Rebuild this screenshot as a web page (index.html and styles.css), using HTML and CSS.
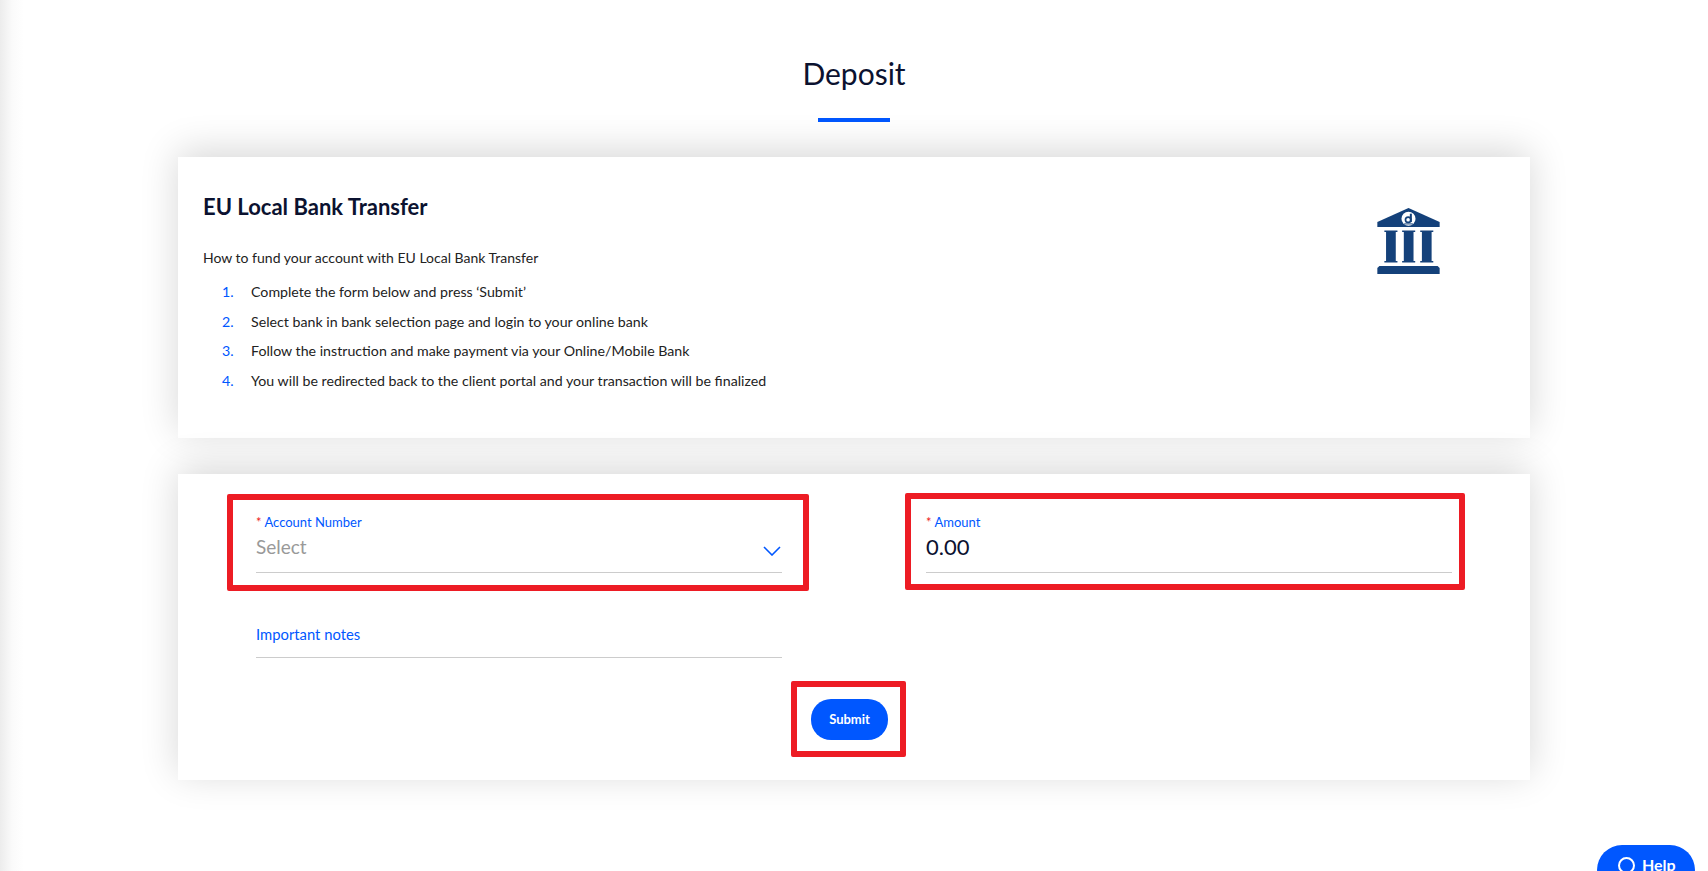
FILE: index.html
```html
<!DOCTYPE html>
<html lang="en">

<head>
    <meta charset="UTF-8">
    <title>Deposit</title>
    <link rel="stylesheet" href="styles.css">
</head>

<body>

    <div class="page">
        <h1 class="page-title">Deposit</h1>
        <div class="title-bar"></div>

        <section class="card info-card">
            <div class="info-text">
                <h2>EU Local Bank Transfer</h2>
                <p>How to fund your account with EU Local Bank Transfer</p>
                <ol class="steps">
                    <li><span class="step-num">1.</span>Complete the form below and press ‘Submit’</li>
                    <li><span class="step-num">2.</span>Select bank in bank selection page and login to your online bank</li>
                    <li><span class="step-num">3.</span>Follow the instruction and make payment via your Online/Mobile Bank</li>
                    <li><span class="step-num">4.</span>You will be redirected back to the client portal and your transaction will be finalized</li>
                </ol>
            </div>
            <svg class="bank-icon" viewBox="112 55 186 197" aria-hidden="true">
                <path fill="#14417a" d="M205 55L298 97V112H112V97Z" />
                <circle cx="205" cy="87" r="21" fill="#fff" />
                <circle cx="204" cy="90" r="8" fill="none" stroke="#14417a" stroke-width="5" />
                <rect x="209" y="72" width="6" height="25" fill="#14417a" />
                <rect x="192" y="101" width="26" height="3" fill="#14417a" />
                <path fill="#14417a" d="M133 122H172V127H167V213H172V218H133V213H138V127H133Z" />
                <path fill="#14417a" d="M186 122H225V127H220V213H225V218H186V213H191V127H186Z" />
                <path fill="#14417a" d="M240 122H279V127H274V213H279V218H240V213H245V127H240Z" />
                <path fill="#14417a" d="M118 228H292L298 234V252H112V234Z" />
            </svg>
        </section>

        <section class="card form-card">
            <div class="form-row">
                <div class="marked account-box">
                    <div class="field">
                        <label><span class="req">*</span> Account Number</label>
                        <div class="select-row">
                            <span class="placeholder">Select</span>
                            <svg class="chevron" viewBox="0 0 18 10" aria-hidden="true">
                                <path d="M1 1L9 9L17 1" fill="none" stroke="#0057ff" stroke-width="1.6" />
                            </svg>
                        </div>
                    </div>
                </div>
                <div class="marked amount-box">
                    <div class="field">
                        <label><span class="req">*</span> Amount</label>
                        <div class="value">0.00</div>
                    </div>
                </div>
            </div>
            <div class="notes">Important notes</div>
            <div class="marked submit-box">
                <button type="button">Submit</button>
            </div>
        </section>
    </div>

    <div class="help-btn">
        <span class="help-ring"></span>
        Help
    </div>

</body>

</html>
```

FILE: styles.css
```css
html,
body {
    height: 100%;
}

body {
    background: linear-gradient(to right, #ececec, #fafafa 12px, #fff 24px);
    font-family: 'Lato', sans-serif;
    color: #222;
    margin: 0;
    overflow: hidden;
}

.page {
    padding: 0 178px;
}

.page-title {
    font-size: 30px;
    font-weight: 400;
    line-height: 40px;
    color: #0b1230;
    text-align: center;
    margin: 0;
    padding-top: 53px;
}

.title-bar {
    width: 72px;
    height: 4px;
    background: #0057ff;
    margin: 25px auto 35px;
}

.card {
    background: white;
    box-shadow: 0 -6px 36px rgba(0, 0, 0, 0.16);
}

.info-card {
    display: flex;
    justify-content: space-between;
    height: 281px;
    padding: 0 90px 0 25px;
    margin-bottom: 36px;
}

.info-text h2 {
    font-size: 22px;
    font-weight: 700;
    line-height: 30px;
    color: #0b1230;
    margin: 35px 0 0;
}

.info-text p {
    font-size: 14px;
    line-height: 20px;
    margin: 26px 0 0;
}

.steps {
    list-style: none;
    font-size: 14.2px;
    line-height: 20px;
    margin: 14px 0 0;
    padding: 0 0 0 19px;
}

.steps li {
    display: flex;
    margin-bottom: 9.7px;
}

.step-num {
    width: 29px;
    color: #0057ff;
}

.bank-icon {
    width: 63px;
    height: 66px;
    margin-top: 51px;
}

.form-card {
    height: 286px;
    padding: 20px 0 0 49px;
}

.form-row {
    display: flex;
    gap: 96px;
}

.marked {
    border: 6px solid #ed1c24;
    border-radius: 2px;
}

.account-box {
    width: 582px;
    height: 97px;
    padding: 13px 21px 0 23px;
    box-sizing: border-box;
}

.amount-box {
    width: 560px;
    height: 97px;
    margin-top: -1px;
    padding: 14px 7px 0 15px;
    box-sizing: border-box;
}

.field label {
    display: block;
    font-size: 13px;
    line-height: 18px;
    color: #0057ff;
}

.req {
    color: #ed1c24;
}

.select-row,
.value {
    display: flex;
    justify-content: space-between;
    align-items: flex-start;
    height: 38px;
    padding-top: 3px;
    border-bottom: 1px solid #ccc;
    font-size: 19px;
    line-height: 26px;
}

.placeholder {
    color: #999;
}

.value {
    color: #0b1230;
    font-size: 22px;
}

.chevron {
    width: 18px;
    height: 10px;
    margin: 12px 1px 0 0;
}

.notes {
    width: 526px;
    box-sizing: border-box;
    height: 47px;
    margin: 20px 0 0 29px;
    padding-top: 13px;
    border-bottom: 1px solid #ccc;
    font-size: 14.8px;
    line-height: 20px;
    color: #0057ff;
}

.submit-box {
    width: 115px;
    height: 76px;
    box-sizing: border-box;
    display: flex;
    align-items: center;
    justify-content: center;
    padding-left: 2px;
    margin: 23px 0 0 564px;
}

button {
    width: 77px;
    height: 41px;
    background: #0057ff;
    color: white;
    border: none;
    border-radius: 20px;
    cursor: pointer;
    font-family: inherit;
    font-size: 13px;
    font-weight: 700;
}

.help-btn {
    position: fixed;
    left: 1597px;
    top: 845px;
    width: 98px;
    height: 50px;
    box-sizing: border-box;
    padding: 10px 0 0 21px;
    display: flex;
    gap: 7px;
    background: #0057ff;
    border-radius: 25px;
    color: white;
    font-size: 16px;
    font-weight: 700;
    line-height: 20px;
}

.help-ring {
    width: 17px;
    height: 17px;
    box-sizing: border-box;
    border: 2.5px solid white;
    border-radius: 50%;
    margin-top: 2px;
}
```
